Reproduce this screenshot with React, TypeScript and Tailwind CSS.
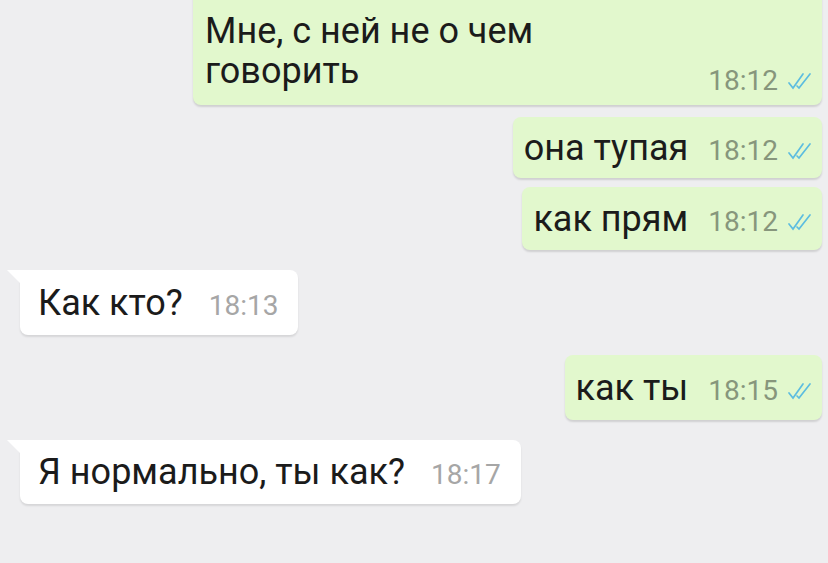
const Checks = () => (
  <svg width="30" height="20" viewBox="0 0 30 20" className="ml-[8px] shrink-0">
    <path d="M3 12 L7 17 L17 3" fill="none" stroke="#5cbde0" strokeWidth="1.7" strokeLinecap="round" />
    <path d="M11 15 L13 17 L24 3" fill="none" stroke="#5cbde0" strokeWidth="1.7" strokeLinecap="round" />
  </svg>
);

type Msg = { text: string; time: string; out: boolean; mt: string; h: string };

const messages: Msg[] = [
  { text: "она тупая", time: "18:12", out: true, mt: "mt-[12px]", h: "h-[61px]" },
  { text: "как прям", time: "18:12", out: true, mt: "mt-[9px]", h: "h-[63px]" },
  { text: "Как кто?", time: "18:13", out: false, mt: "mt-[20px]", h: "h-[65px]" },
  { text: "как ты", time: "18:15", out: true, mt: "mt-[20px]", h: "h-[65px]" },
  { text: "Я нормально, ты как?", time: "18:17", out: false, mt: "mt-[20px]", h: "h-[64px]" },
];

export default function App() {
  return (
    <div
      className="w-[828px] h-[563px] overflow-hidden bg-[#eeeef0] pl-[6px] pr-[6px]"
      style={{ fontFamily: "Roboto, 'Noto Sans', sans-serif" }}
    >
      <div className="flex flex-col">
        {/* first long outgoing bubble, top clipped */}
        <div className="self-end w-[629px] -mt-[12px] rounded-[8px] bg-[#e2f8cd] shadow-[0_2px_2px_rgba(0,0,0,0.13)] pl-[12px] pr-[6px] pt-[23px] pb-[14px]">
          <div className="text-[36px] leading-[40px] text-[#1b1b1b]">Мне, с ней не о чем</div>
          <div className="flex items-baseline justify-between">
            <span className="text-[36px] leading-[40px] text-[#1b1b1b]">говорить</span>
            <span className="relative top-[7px] flex items-center text-[28px] leading-[32px] text-[#87967c]">
              18:12
              <Checks />
            </span>
          </div>
        </div>

        {messages.map((m, i) =>
          m.out ? (
            <div
              key={i}
              className={`self-end ${m.mt} ${m.h} flex items-center rounded-[8px] bg-[#e2f8cd] shadow-[0_2px_2px_rgba(0,0,0,0.13)] pl-[11px] pr-[6px]`}
            >
              <span className="text-[36px] text-[#1b1b1b]">{m.text}</span>
              <span className="ml-[20px] mt-[6px] flex items-center text-[28px] text-[#87967c]">
                {m.time}
                <Checks />
              </span>
            </div>
          ) : (
            <div key={i} className={`self-start ${m.mt} relative ml-[14px]`}>
              <svg width="14" height="14" viewBox="0 0 14 14" className="absolute -left-[13px] top-0">
                <path d="M0 0 L14 0 L14 14 Z" fill="#ffffff" />
              </svg>
              <div
                className={`${m.h} flex items-center rounded-[8px] rounded-tl-none bg-white shadow-[0_2px_2px_rgba(0,0,0,0.1)] pl-[18px] pr-[20px]`}
              >
                <span className="text-[36px] text-[#1b1b1b]">{m.text}</span>
                <span className="ml-[26px] mt-[6px] text-[28px] text-[#a6a6a6]">{m.time}</span>
              </div>
            </div>
          )
        )}
      </div>
    </div>
  );
}
